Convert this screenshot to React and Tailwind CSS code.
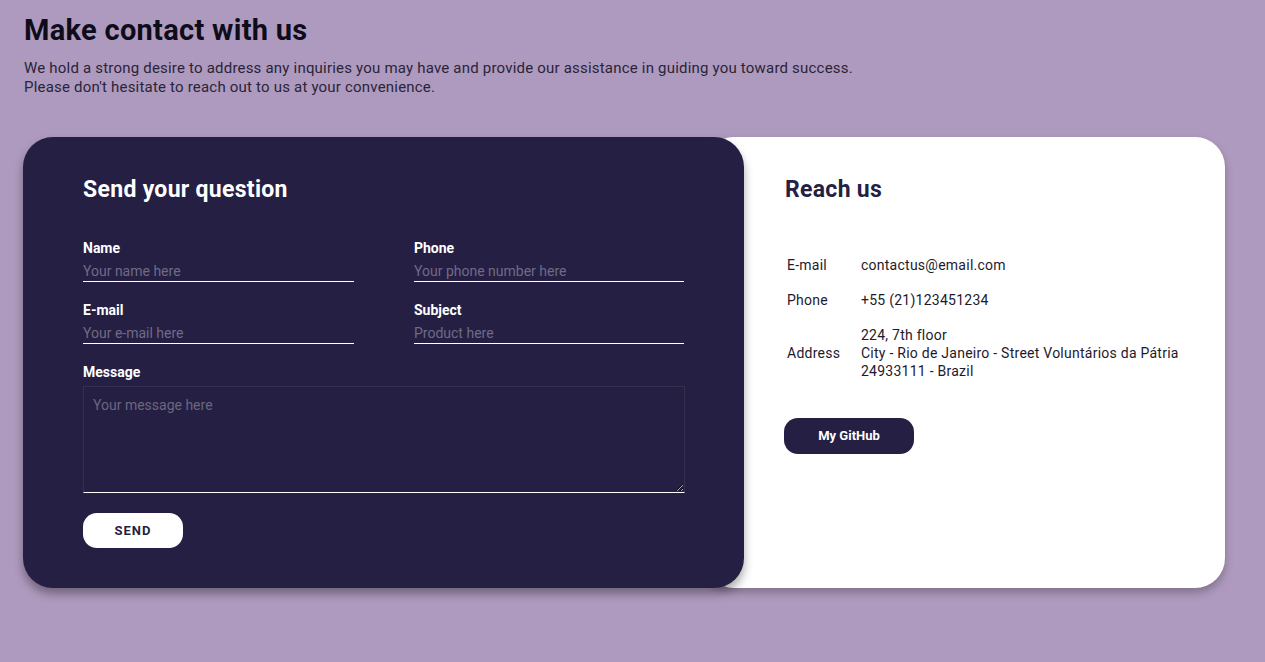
const Field = ({ label, placeholder }) => (
  <label className="flex flex-col">
    <span className="text-[14px] font-bold leading-[18px] text-white">{label}</span>
    <input
      placeholder={placeholder}
      className="mt-[4px] h-[21px] w-full border-b border-white bg-transparent p-0 text-[14px] text-white outline-none placeholder:text-[#6f6b84]"
    />
  </label>
)

const InfoRow = ({ label, children }) => (
  <tr>
    <td className="w-[76px] pb-[8px] pl-[2px] pt-[9px] align-middle leading-[18px]">{label}</td>
    <td className="pb-[8px] pt-[9px] align-middle leading-[18px]">{children}</td>
  </tr>
)

export default function App() {
  return (
    <div className="min-h-[662px] bg-[#ae9abe] px-[23px] pt-[14px] font-['Roboto',sans-serif] text-[#1d1a2e]">
      <h1 className="pl-[1px] text-[29px] font-bold leading-[32px] tracking-[0.3px] text-[#0f0c1a]">Make contact with us</h1>
      <p className="mt-[13px] pl-[1px] text-[15px] leading-[19px] tracking-[0.2px] text-[#2a2438]">
        We hold a strong desire to address any inquiries you may have and provide our assistance in guiding you toward success.
        <br />
        Please don't hesitate to reach out to us at your convenience.
      </p>

      <div className="mt-[40px] flex h-[451px] w-[1202px]">
        <div className="relative z-10 w-[721px] shrink-0 rounded-[30px] bg-[#251f44] px-[60px] pt-[39px] shadow-[0_6px_10px_rgba(0,0,0,0.35)]">
          <h2 className="text-[23px] font-bold leading-[28px] tracking-[0.3px] text-white">Send your question</h2>
          <div className="mt-[35px] grid grid-cols-[271px_270px] gap-x-[60px] gap-y-[19px]">
            <Field label="Name" placeholder="Your name here" />
            <Field label="Phone" placeholder="Your phone number here" />
            <Field label="E-mail" placeholder="Your e-mail here" />
            <Field label="Subject" placeholder="Product here" />
          </div>
          <label className="mt-[19px] flex flex-col">
            <span className="text-[14px] font-bold leading-[18px] text-white">Message</span>
            <textarea
              placeholder="Your message here"
              className="mt-[5px] h-[107px] w-[602px] resize-y border border-[#36304f] border-b-white bg-transparent px-[9px] py-[8px] text-[14px] text-white outline-none placeholder:text-[#6b677c]"
            />
          </label>
          <button className="mt-[20px] h-[35px] w-[100px] rounded-[14px] bg-white text-[13px] font-bold tracking-[1px] text-[#251f44]">SEND</button>
        </div>

        <div className="-ml-[40px] flex-1 rounded-[30px] bg-white pl-[81px] pt-[39px] shadow-[0_5px_8px_rgba(0,0,0,0.25)]">
          <h2 className="text-[23px] font-bold leading-[28px] tracking-[0.3px] text-[#251f44]">Reach us</h2>
          <table className="mt-[43px] border-collapse text-[14px] tracking-[0.25px] text-[#1d1a2e]">
            <tbody>
              <InfoRow label="E-mail">contactus@email.com</InfoRow>
              <InfoRow label="Phone">+55 (21)123451234</InfoRow>
              <InfoRow label="Address">
                224, 7th floor
                <br />
                City - Rio de Janeiro - Street Voluntários da Pátria
                <br />
                24933111 - Brazil
              </InfoRow>
            </tbody>
          </table>
          <button className="-ml-[1px] mt-[30px] h-[36px] w-[130px] rounded-[14px] bg-[#251f44] text-[13px] font-bold text-white">My GitHub</button>
        </div>
      </div>
    </div>
  )
}
